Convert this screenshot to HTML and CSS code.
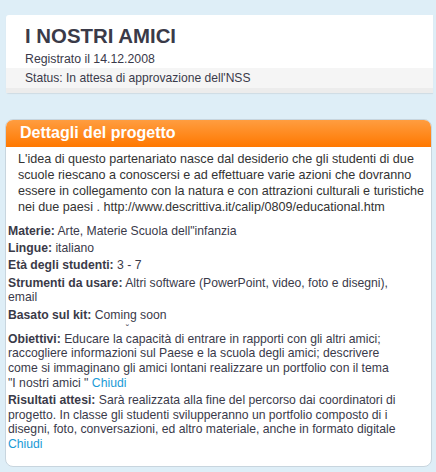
FILE: index.html
```html
<!DOCTYPE html>
<html lang="it">
<head>
    <meta charset="UTF-8">
    <meta name="viewport" content="width=device-width, initial-scale=1.0">
    <title>I nostri amici</title>
    <link rel="stylesheet" href="styles.css">
</head>
<body>
    <div class="card">
        <h1>I NOSTRI AMICI</h1>
        <div class="reg">Registrato il 14.12.2008</div>
        <div class="status">Status: In attesa di approvazione dell'NSS</div>
    </div>

    <div class="panel">
        <div class="panel-head">Dettagli del progetto</div>
        <p class="intro">L'idea di questo partenariato nasce dal desiderio che gli studenti di due scuole riescano a conoscersi e ad effettuare varie azioni che dovranno essere in collegamento con la natura e con attrazioni culturali e turistiche nei due paesi . http://www.descrittiva.it/calip/0809/educational.htm</p>

        <div class="details">
            <div class="row"><b>Materie:</b> Arte, Materie Scuola dell"infanzia</div>
            <div class="row"><b>Lingue:</b> italiano</div>
            <div class="row"><b>Età degli studenti:</b> 3 - 7</div>
            <div class="row"><b>Strumenti da usare:</b> Altri software (PowerPoint, video, foto e disegni), email</div>
            <div class="row"><b>Basato sul kit:</b> Coming soon</div>
            <div class="stray">˘</div>
            <div class="row"><b>Obiettivi:</b> Educare la capacità di entrare in rapporti con gli altri amici; raccogliere informazioni sul Paese e la scuola degli amici; descrivere come si immaginano gli amici lontani realizzare un portfolio con il tema <span class="title">"I nostri amici "</span> <a href="#">Chiudi</a></div>
            <div class="row"><b>Risultati attesi:</b> Sarà realizzata alla fine del percorso dai coordinatori di progetto. In classe gli studenti svilupperanno un portfolio composto di i disegni, foto, conversazioni, ed altro materiale, anche in formato digitale <a href="#">Chiudi</a></div>
        </div>
    </div>
</body>
</html>
```

FILE: styles.css
```css
body {
    margin: 0;
    background: #deeef7;
    font-family: "Liberation Sans", Arial, sans-serif;
    color: #3a3a4a;
}
.card {
    margin: 15px 3px 0 6px;
    background: #fff;
    border-radius: 3px 0 0 3px;
    box-shadow: 0 1px 1px #cfdbe3;
}
.card h1 {
    margin: 0;
    padding: 9px 19px 0;
    font-size: 20.4px;
    line-height: 24px;
    color: #3a3a48;
}
.reg {
    padding: 3px 19px 1px;
    font-size: 12.3px;
    line-height: 16px;
}
.status {
    background: #f5f5f5;
    border-bottom: 5px solid #ececec;
    padding: 2px 19px 2px;
    font-size: 12.1px;
    line-height: 16px;
}
.panel {
    margin: 26px 4px 10px 5px;
    background: #fff;
    border: 1px solid #c8d5de;
    border-radius: 8px;
}
.panel-head {
    height: 27px;
    line-height: 26px;
    padding-left: 14px;
    border-radius: 7px 7px 0 0;
    background: linear-gradient(#ff9d40, #ff7800);
    color: #fff;
    font-weight: bold;
    font-size: 16px;
}
.intro {
    margin: 0;
    padding: 4px 5px 0 12px;
    font-size: 12.6px;
    line-height: 16px;
    color: #333;
}
.details {
    margin-top: 9px;
    padding: 0 26px 12px 2px;
    font-size: 12.2px;
    line-height: 14.7px;
}
.row {
    margin-bottom: 2.5px;
}
.row b {
    color: #3a3a48;
}
.title {
    white-space: nowrap;
}
.stray {
    height: 7px;
    line-height: 7px;
    padding-left: 118px;
    font-size: 9px;
}
.details a {
    color: #1a9ad6;
    text-decoration: none;
}
```
